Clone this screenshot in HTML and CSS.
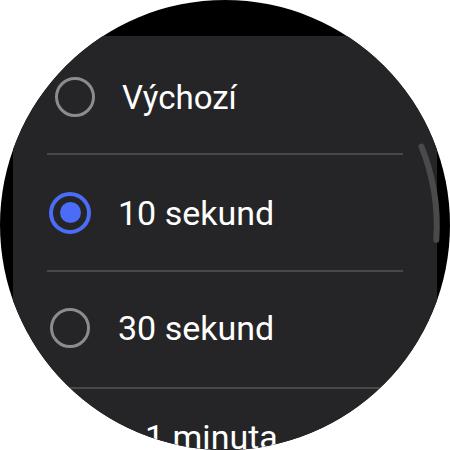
FILE: index.html
```html
<!DOCTYPE html>
<html lang="cs">

<head>
    <meta charset="UTF-8">
    <title>Časový limit</title>
    <link rel="stylesheet" href="styles.css">
</head>

<body>

    <div class="watch">
        <div class="top-bar"></div>

        <!-- seznam voleb -->
        <div class="list">
            <div class="row row-1">
                <span class="radio"></span>
                <span class="label">Výchozí</span>
            </div>
            <div class="divider"></div>
            <div class="row row-2">
                <span class="radio checked"></span>
                <span class="label">10 sekund</span>
            </div>
            <div class="divider"></div>
            <div class="row row-3">
                <span class="radio"></span>
                <span class="label">30 sekund</span>
            </div>
            <div class="divider"></div>
            <div class="row row-4">
                <span class="radio"></span>
                <span class="label">1 minuta</span>
            </div>
        </div>

        <svg class="scrollbar" width="450" height="450" viewBox="0 0 450 450">
            <path d="M 421.5 146.6 A 212 212 0 0 1 436.3 239.8" fill="none" stroke="#4a4a4c" stroke-width="6" stroke-linecap="round"/>
        </svg>
    </div>

</body>

</html>
```

FILE: styles.css
```css
body {
    margin: 0;
    background-color: #FFFFFF;
    font-family: Roboto, "Liberation Sans", sans-serif;
}

.watch {
    position: relative;
    width: 450px;
    height: 450px;
    border-radius: 50%;
    overflow: hidden;
    background-color: #000000;
}

.top-bar {
    height: 36px;
}

.list {
    margin: 0 13px;
    height: 414px;
    background-color: #252527;
}

.row {
    display: flex;
    align-items: center;
    color: #FFFFFF;
    box-sizing: border-box;
}

.divider {
    height: 2px;
    margin: 0 34px;
    background-color: #48484a;
}

.radio {
    box-sizing: border-box;
    display: flex;
    align-items: center;
    justify-content: center;
    width: 40px;
    height: 40px;
    border: 3px solid #8c8c8c;
    border-radius: 50%;
    flex-shrink: 0;
}

.radio.checked {
    width: 42px;
    height: 42px;
    border: 4px solid #4a6cf7;
}

.radio.checked::after {
    content: "";
    width: 21px;
    height: 21px;
    border-radius: 50%;
    background-color: #4a6cf7;
}

.row-1 {
    height: 117px;
    padding: 5px 0 0 42px;
    gap: 27px;
    font-size: 33px;
}

.row-2 {
    height: 115px;
    padding-left: 36px;
    gap: 27px;
    font-size: 34px;
}

.row-3 {
    height: 115px;
    padding: 0 0 3px 37px;
    gap: 28px;
    font-size: 34px;
}

.row-4 {
    padding: 28px 0 0 67px;
    gap: 25px;
    font-size: 34px;
}

.scrollbar {
    position: absolute;
    top: 0;
    left: 0;
}
```
